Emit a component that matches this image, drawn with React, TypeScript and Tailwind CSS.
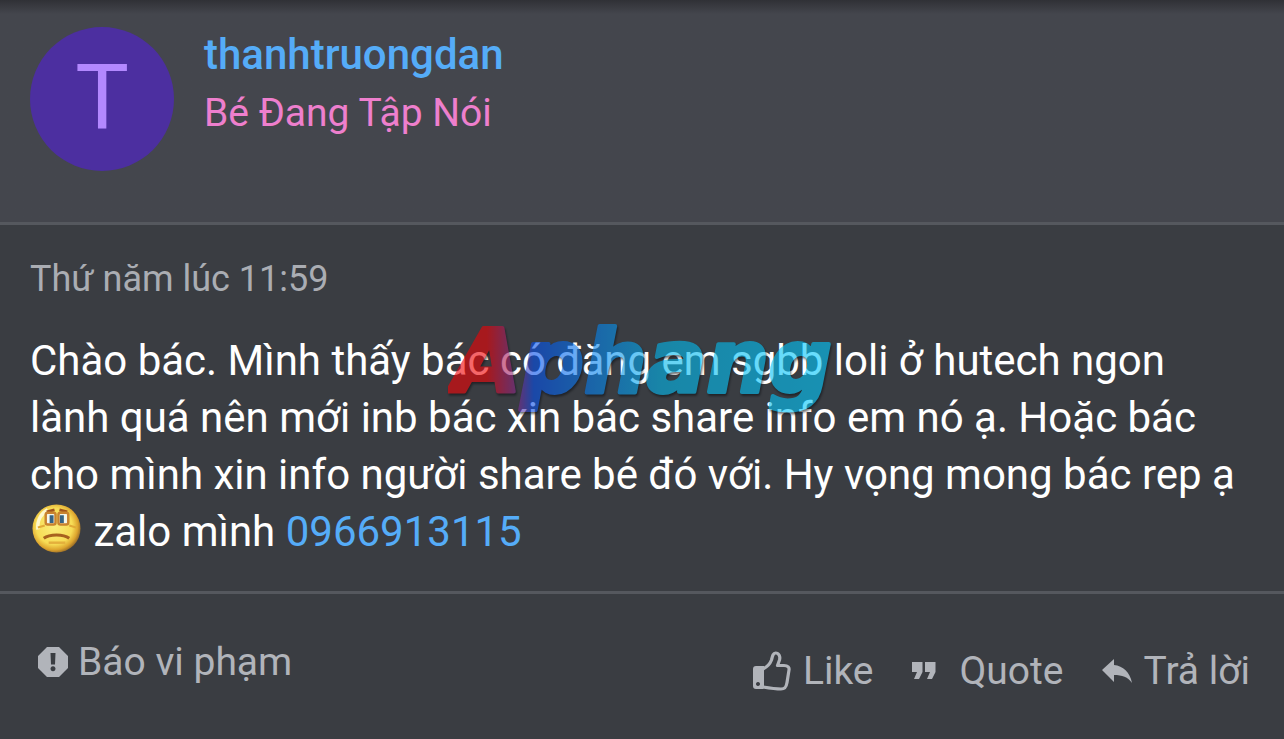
import React from 'react';

const Emoji: React.FC = () => (
  <svg viewBox="0 0 50 50" className="mx-0.5 -mt-3 inline-block h-[49px] w-[49px] align-middle" role="img" aria-label="sad">
    <defs>
      <radialGradient id="face" cx="0.45" cy="0.45" r="0.58">
        <stop offset="0" stopColor="#fbee7c" />
        <stop offset="0.65" stopColor="#f7dc55" />
        <stop offset="0.85" stopColor="#dda52e" />
        <stop offset="1" stopColor="#8f6426" />
      </radialGradient>
    </defs>
    <circle cx="25" cy="25" r="24.500" fill="url(#face)" />
    <path d="M6 26C5 16 10 9 16 6" stroke="#fffbe0" strokeWidth="3.500" fill="none" opacity="0.85" />
    <path d="M15 8l8-2M28 6l8 2" stroke="#a2541c" strokeWidth="3" />
    <rect x="14" y="9" width="10" height="12" rx="2" fill="#f4f5ea" stroke="#c9832f" strokeWidth="2.500" />
    <rect x="27" y="9" width="10" height="12" rx="2" fill="#f4f5ea" stroke="#c9832f" strokeWidth="2.500" />
    <path d="M20 11.500v8M30.500 11.500v8" stroke="#386383" strokeWidth="4" />
    <path d="M6 24l7-2M45 24l-7-2" stroke="#e1a935" strokeWidth="2" />
    <path d="M12 35c6-4.500 20-4.500 26 0" stroke="#a8621e" strokeWidth="3" fill="none" />
    <path d="M17 39.500h17" stroke="#e4b03c" strokeWidth="2.500" />
  </svg>
);

const ReportIcon: React.FC = () => (
  <svg viewBox="0 0 30 30" className="h-[30px] w-[30px]" fill="currentColor" aria-hidden="true">
    <path
      fillRule="evenodd"
      d="M9 0h12l9 9v12l-9 9H9l-9-9V9zM12.500 6l.5 11.500h4L17.500 6zM15 19.200a2.500 2.500 0 1 0 .01 0z"
    />
  </svg>
);

const LikeIcon: React.FC = () => (
  <svg viewBox="0 0 38 40" className="h-10 w-[38px]" aria-hidden="true">
    <path
      d="M10 18c4-2 7-5 8.500-9C19.500 5 20 2 22.500 2c3.500 0 5 3.500 4 7l-2 5.500h6.500c4 0 5.500 2 5 4.500l-2 12.500c-.7 4.500-2 6.500-6 6.500-6 0-12-1-18-2"
      fill="none"
      stroke="currentColor"
      strokeWidth="3.200"
      strokeLinejoin="round"
    />
    <path
      fillRule="evenodd"
      fill="currentColor"
      d="M3 15h8v21c0 1.500-.5 2-2 2H3c-2 0-3-1-3-3V18c0-2 1-3 3-3zM5 31a2 2 0 1 0 .01 0z"
    />
  </svg>
);

const QuoteIcon: React.FC = () => (
  <svg viewBox="0 0 24 18" className="h-[18px] w-6" fill="currentColor" aria-hidden="true">
    <path d="M0 0h10.500v10l-3.500 7H2l3-7H0zM13 0h10.500v10l-3.500 7h-5l3-7h-5z" />
  </svg>
);

const ReplyIcon: React.FC = () => (
  <svg viewBox="0 0 30 24" className="h-6 w-[30px]" fill="currentColor" aria-hidden="true">
    <path d="M0 11L12 0v6c9 1 16 7 18 18-4-6-10-8-18-8v7z" />
  </svg>
);

const Watermark: React.FC = () => (
  <svg
    viewBox="0 0 400 120"
    className="pointer-events-none absolute top-[84px] left-[448px] h-[120px] w-[400px] opacity-60 drop-shadow-[1px_2px_1px_#101216]"
    aria-hidden="true"
  >
    <defs>
      <linearGradient id="brand" gradientUnits="userSpaceOnUse" x1="0" y1="0" x2="390" y2="0">
        <stop offset="0.1" stopColor="#f00206" />
        <stop offset="0.18" stopColor="#7d2d95" />
        <stop offset="0.22" stopColor="#0550ec" />
        <stop offset="0.42" stopColor="#0590ee" />
        <stop offset="0.55" stopColor="#03b8ec" />
        <stop offset="1" stopColor="#03caff" />
      </linearGradient>
    </defs>
    <text
      x="5"
      y="83"
      fill="url(#brand)"
      stroke="url(#brand)"
      strokeWidth="4"
      strokeLinejoin="round"
      className="font-['DejaVu_Sans',sans-serif] text-[88px] font-bold italic"
    >
      Aphang
    </text>
  </svg>
);

const App: React.FC = () => {
  return (
    <article className="min-h-screen bg-[#3a3d42] font-[Roboto,sans-serif]">
      <header className="flex items-start border-b-3 border-[#55585e] bg-[#44464d] bg-linear-to-b from-[#303136] to-[#44464d] to-[14px] px-[30px] pt-[27px] pb-[51px]">
        <div className="flex h-36 w-36 shrink-0 items-center justify-center rounded-full bg-[#4c2fa0] text-[90px] leading-none text-[#b388ff]">
          T
        </div>
        <div className="ml-[30px]">
          <h4 className="text-[42px] leading-[56px] font-medium text-[#55acf8]">
            <a href="#user">thanhtruongdan</a>
          </h4>
          <h5 className="text-[39px] leading-[60px] text-[#ee7fcd]">Bé Đang Tập Nói</h5>
        </div>
      </header>

      <div className="relative px-[30px] pt-[30px] pb-[31px]">
        <time className="block text-[36px] leading-[48px] text-[#aaadb3]">Thứ năm lúc 11:59</time>
        <p className="mt-[29px] text-[42px] leading-[57px] text-white">
          Chào bác. Mình thấy bác có đăng em sgbb loli ở hutech ngon lành quá nên mới inb bác xin bác share info em nó
          ạ. Hoặc bác cho mình xin info người share bé đó với. Hy vọng mong bác rep ạ <Emoji /> zalo mình{' '}
          <a href="#contact" className="text-[#55acf8]">0966913115</a>
        </p>
        <Watermark />
      </div>

      <footer className="flex items-start justify-between border-t-3 border-[#55585e] px-[34px] pt-[42px] pb-[30px] text-[39px] leading-[52px] text-[#b1b4ba]">
        <button type="button" className="flex items-center gap-2.5 pl-1">
          <ReportIcon />
          Báo vi phạm
        </button>
        <div className="mt-[9px] flex items-center gap-[38px]">
          <button type="button" className="flex items-center gap-3">
            <LikeIcon />
            Like
          </button>
          <button type="button" className="flex items-center gap-6">
            <QuoteIcon />
            Quote
          </button>
          <button type="button" className="flex items-center gap-3">
            <ReplyIcon />
            Trả lời
          </button>
        </div>
      </footer>
    </article>
  );
};

export default App;
